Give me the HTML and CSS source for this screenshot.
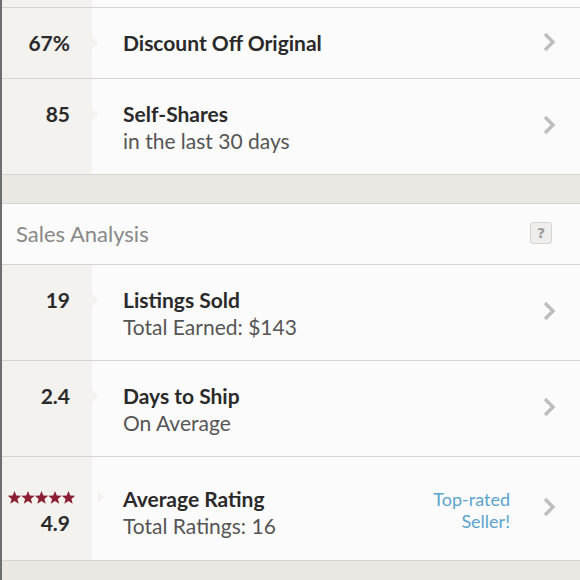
FILE: index.html
```html
<!DOCTYPE html>
<html>
<head>
<meta charset="utf-8">
<link rel="stylesheet" href="styles.css">
</head>
<body>
<div class="page">
  <div class="row row-top">
    <div class="stat"></div>
    <div class="info"></div>
  </div>
  <div class="row row-one">
    <div class="stat"><div class="num">67%</div></div>
    <div class="info"><div class="title">Discount Off Original</div></div>
    <div class="chev"><svg width="14" height="20" viewBox="0 0 14 20"><polyline points="3,2 11,10 3,18" fill="none" stroke="#bdbdbd" stroke-width="3.4"/></svg></div>
  </div>
  <div class="row row-two">
    <div class="stat"><div class="num">85</div></div>
    <div class="info"><div class="title">Self-Shares</div><div class="sub">in the last 30 days</div></div>
    <div class="chev"><svg width="14" height="20" viewBox="0 0 14 20"><polyline points="3,2 11,10 3,18" fill="none" stroke="#bdbdbd" stroke-width="3.4"/></svg></div>
  </div>
  <div class="band"></div>
  <div class="header">
    <div class="htitle">Sales Analysis</div>
    <div class="help">?</div>
  </div>
  <div class="row row-two">
    <div class="stat"><div class="num">19</div></div>
    <div class="info"><div class="title">Listings Sold</div><div class="sub">Total Earned: $143</div></div>
    <div class="chev"><svg width="14" height="20" viewBox="0 0 14 20"><polyline points="3,2 11,10 3,18" fill="none" stroke="#bdbdbd" stroke-width="3.4"/></svg></div>
  </div>
  <div class="row row-two">
    <div class="stat"><div class="num">2.4</div></div>
    <div class="info"><div class="title">Days to Ship</div><div class="sub">On Average</div></div>
    <div class="chev"><svg width="14" height="20" viewBox="0 0 14 20"><polyline points="3,2 11,10 3,18" fill="none" stroke="#bdbdbd" stroke-width="3.4"/></svg></div>
  </div>
  <div class="row row-rating">
    <div class="stat">
      <div class="stars">
        <svg width="68" height="14" viewBox="0 0 68 14">
          <g fill="#8b1e33">
            <path id="s" d="M6.5 0 L8.3 4.6 L13.2 4.8 L9.4 7.9 L10.7 12.8 L6.5 10 L2.3 12.8 L3.6 7.9 L-0.2 4.8 L4.7 4.6 Z"/>
            <use href="#s" x="13.5"/>
            <use href="#s" x="27"/>
            <use href="#s" x="40.5"/>
            <use href="#s" x="54"/>
          </g>
        </svg>
      </div>
      <div class="num">4.9</div>
    </div>
    <div class="info"><div class="title">Average Rating</div><div class="sub">Total Ratings: 16</div></div>
    <div class="badge">Top-rated<br>Seller!</div>
    <div class="chev"><svg width="14" height="20" viewBox="0 0 14 20"><polyline points="3,2 11,10 3,18" fill="none" stroke="#bdbdbd" stroke-width="3.4"/></svg></div>
  </div>
  <div class="band-bottom"></div>
</div>
</body>
</html>
```
FILE: styles.css
```css
html, body {
  margin: 0;
  padding: 0;
}
body {
  background: #ebe8e3;
  font-family: "Lato", "Open Sans", sans-serif;
  width: 580px;
  height: 580px;
  overflow: hidden;
}
.page {
  border-left: 2px solid #6e6e6e;
  min-height: 580px;
  box-sizing: border-box;
}
.row {
  display: flex;
  align-items: stretch;
  background: #fcfbfb;
  border-bottom: 1px solid #d6d4d2;
}
.row-top { height: 7px; }
.row-one { height: 70px; }
.row-two { height: 95px; }
.row-rating { height: 103px; }
.stat {
  width: 90px;
  flex: none;
  background: #f3f2ef;
  display: flex;
  flex-direction: column;
  justify-content: center;
  align-items: flex-end;
  padding-right: 22px;
  box-sizing: border-box;
  position: relative;
}
.num {
  font-weight: 700;
  font-size: 21px;
  color: #2a2a2a;
  line-height: 27px;
  position: relative;
}
.num::after {
  content: "";
  position: absolute;
  right: -28px;
  top: 8px;
  border-left: 6px solid #f3f2ef;
  border-top: 6px solid transparent;
  border-bottom: 6px solid transparent;
}
.row-one .num { margin-bottom: 2px; }
.row-two .num { margin-bottom: 27px; }
.row-rating .num::after { display: none; }
.row-rating .stars { position: relative; }
.row-rating .stars::after {
  content: "";
  position: absolute;
  right: -28px;
  top: 1px;
  border-left: 6px solid #f3f2ef;
  border-top: 6px solid transparent;
  border-bottom: 6px solid transparent;
}
.stars {
  display: flex;
  margin-right: -6px;
  height: 16px;
  align-items: center;
  margin-bottom: 3px;
  margin-top: 10px;
}
.row-rating .num { margin-bottom: 2px; }
.stars svg { display: block; overflow: visible; }
.info {
  flex: 1;
  padding-left: 31px;
  display: flex;
  flex-direction: column;
  justify-content: center;
}
.row-one .info { padding-bottom: 2px; }
.row-rating .info { padding-top: 6px; }
.title {
  font-weight: 700;
  font-size: 21px;
  color: #2a2a2a;
  line-height: 27px;
}
.sub {
  font-size: 21px;
  color: #555555;
  line-height: 27px;
}
.chev {
  width: 40px;
  flex: none;
  display: flex;
  align-items: center;
  padding-left: 2px;
  padding-bottom: 3px;
  box-sizing: border-box;
}
.chev svg { display: block; }
.badge {
  align-self: center;
  text-align: right;
  color: #5aa4cb;
  font-size: 18px;
  line-height: 22px;
  margin-right: 30px;
  margin-top: 2px;
}
.band {
  height: 28px;
  background: #ebe8e3;
  border-bottom: 1px solid #d6d4d2;
}
.header {
  height: 60px;
  background: #fcfbfb;
  border-bottom: 1px solid #d6d4d2;
  display: flex;
  align-items: center;
  justify-content: space-between;
  padding: 0 28px 2px 14px;
  box-sizing: border-box;
  height: 61px;
}
.htitle {
  font-size: 22px;
  color: #888888;
}
.help {
  width: 22px;
  height: 22px;
  box-sizing: border-box;
  border: 1px solid #d4d4d4;
  border-radius: 3px;
  background: #efeeec;
  color: #9a9a9a;
  font-family: "DejaVu Sans", sans-serif;
  font-weight: 700;
  font-size: 14px;
  line-height: 20px;
  text-align: center;
}
.band-bottom {
  height: 20px;
  background: #ebe8e3;
}
```
